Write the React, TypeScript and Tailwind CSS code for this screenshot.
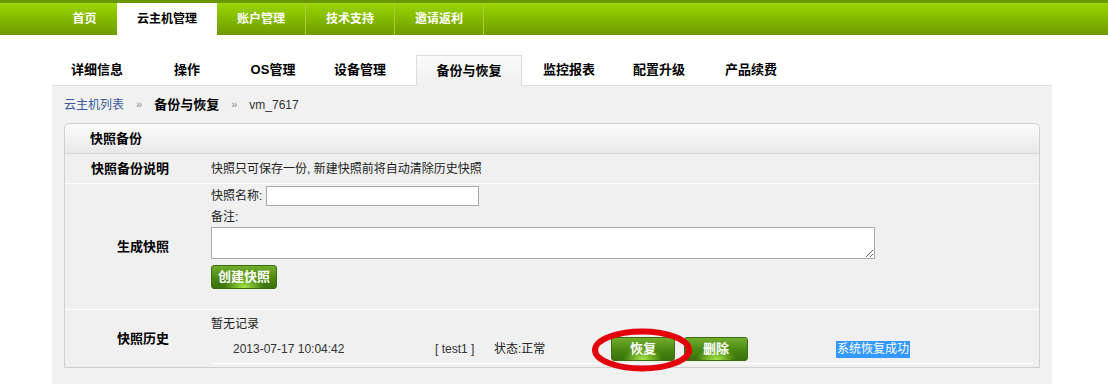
import React from "react";

const font = "font-['Liberation_Sans','Noto_Sans_CJK_SC',sans-serif]";

const greenBtn =
  "flex items-center justify-center rounded-[3px] border border-[#3d6c10] text-[13px] font-bold text-white bg-[radial-gradient(ellipse_at_50%_100%,#a6e845_0%,rgba(120,190,40,0)_45%),linear-gradient(#72ad2c,#4a8813_55%,#3a710c)]";

function TopNav() {
  return (
    <div className="h-[35px] border-t-[3px] border-[#6a9600] bg-[linear-gradient(#9ad600,#84b900_50%,#6e9b00)] flex pl-[52px] text-[12px] font-bold text-white">
      <div className="w-[65px] flex items-center justify-center">首页</div>
      <div className="w-[100px] flex items-center justify-center bg-white text-black">云主机管理</div>
      <div className="w-[89px] flex items-center justify-center border-r border-[#a4cf3e]">账户管理</div>
      <div className="w-[89px] flex items-center justify-center border-r border-[#a4cf3e]">技术支持</div>
      <div className="w-[89px] flex items-center justify-center border-r border-[#a4cf3e]">邀请返利</div>
    </div>
  );
}

function SubTabs() {
  return (
    <div className="mt-[20px] ml-[52px] w-[1000px] h-[31px] flex border-b border-[#e0e0e0] text-[13px] font-bold text-black">
      <div className="w-[90px] flex items-center justify-center">详细信息</div>
      <div className="w-[90px] flex items-center justify-center">操作</div>
      <div className="w-[82px] flex items-center justify-center">OS管理</div>
      <div className="w-[92px] flex items-center justify-center">设备管理</div>
      <div className="ml-[10px] w-[106px] flex items-center justify-center border border-b-0 border-[#dcdcdc] bg-[linear-gradient(#fafafa,#f0f0f0)] -mb-px">备份与恢复</div>
      <div className="w-[94px] flex items-center justify-center">监控报表</div>
      <div className="w-[86px] flex items-center justify-center">配置升级</div>
      <div className="w-[98px] flex items-center justify-center">产品续费</div>
    </div>
  );
}

export default function App() {
  return (
    <div className={`w-[1108px] h-[384px] overflow-hidden bg-white ${font}`}>
      <TopNav />
      <SubTabs />
      <div className="ml-[52px] w-[1000px] h-[300px] bg-[#f1f1f1] pl-[12px]">
        <div className="h-[37px] flex items-center text-[12px] text-[#333]">
          <span className="text-[#3b5a9a]">云主机列表</span>
          <span className="mx-[12px] text-[#888] text-[11px]">»</span>
          <span className="font-bold text-[13px] text-black">备份与恢复</span>
          <span className="mx-[12px] text-[#888] text-[11px]">»</span>
          <span>vm_7617</span>
        </div>
        <div className="w-[976px] border border-[#cfcfcf] rounded-t-[5px] bg-[#f0f0f0] text-[12px] text-[#222]">
          <div className="h-[30px] flex items-center pl-[25px] border-b border-[#d5d5d5] rounded-t-[5px] bg-[linear-gradient(#fbfbfb,#e9e9e9)] text-[13px] font-bold text-black">
            快照备份
          </div>
          <div className="flex h-[30px] border-b border-white">
            <div className="w-[126px] flex items-center justify-end pr-[22px] text-[13px] font-bold text-black">快照备份说明</div>
            <div className="flex items-center pl-[20px]">快照只可保存一份, 新建快照前将自动清除历史快照</div>
          </div>
          <div className="flex h-[126px] border-b border-white">
            <div className="w-[126px] flex items-center justify-end pr-[22px] text-[13px] font-bold text-black">生成快照</div>
            <div className="pl-[20px] pt-[2px]">
              <div className="flex items-center h-[20px]">
                <span className="w-[55px]">快照名称:</span>
                <input className="w-[213px] h-[20px] border border-[#aaa] bg-white" />
              </div>
              <div className="h-[21px] flex items-center">备注:</div>
              <textarea className="block w-[664px] h-[32px] border border-[#aaa] bg-white" />
              <button className={`${greenBtn} mt-[6px] w-[66px] h-[24px]`}>创建快照</button>
            </div>
          </div>
          <div className="flex h-[57px]">
            <div className="w-[126px] flex items-center justify-end pr-[22px] text-[13px] font-bold text-black">快照历史</div>
            <div className="pl-[20px] flex-1 pt-[6px]">
              <div className="h-[16px] flex items-center">暂无记录</div>
              <div className="relative mt-[5px] ml-[2px] mr-[6px] pl-[20px] h-[27px] pb-[2px] flex items-center border-b border-white">
                <span className="w-[202px] text-[#333]">2013-07-17 10:04:42</span>
                <span className="w-[59px] text-[#333]">[ test1 ]</span>
                <span className="w-[117px]">状态:正常</span>
                <button className={`${greenBtn} w-[64px] h-[24px]`}>恢复</button>
                <button className={`${greenBtn} ml-[9px] w-[64px] h-[24px]`}>删除</button>
                <span className="ml-[88px] h-[17px] px-[1px] flex items-center bg-[#3399ff] text-white">系统恢复成功</span>
                <svg className="absolute left-[378px] top-[-9px]" width="102" height="44" viewBox="0 0 102 44">
                  <ellipse cx="51" cy="22" rx="47" ry="18.5" fill="none" stroke="#e3000b" strokeWidth="6" />
                </svg>
              </div>
            </div>
          </div>
        </div>
      </div>
    </div>
  );
}
